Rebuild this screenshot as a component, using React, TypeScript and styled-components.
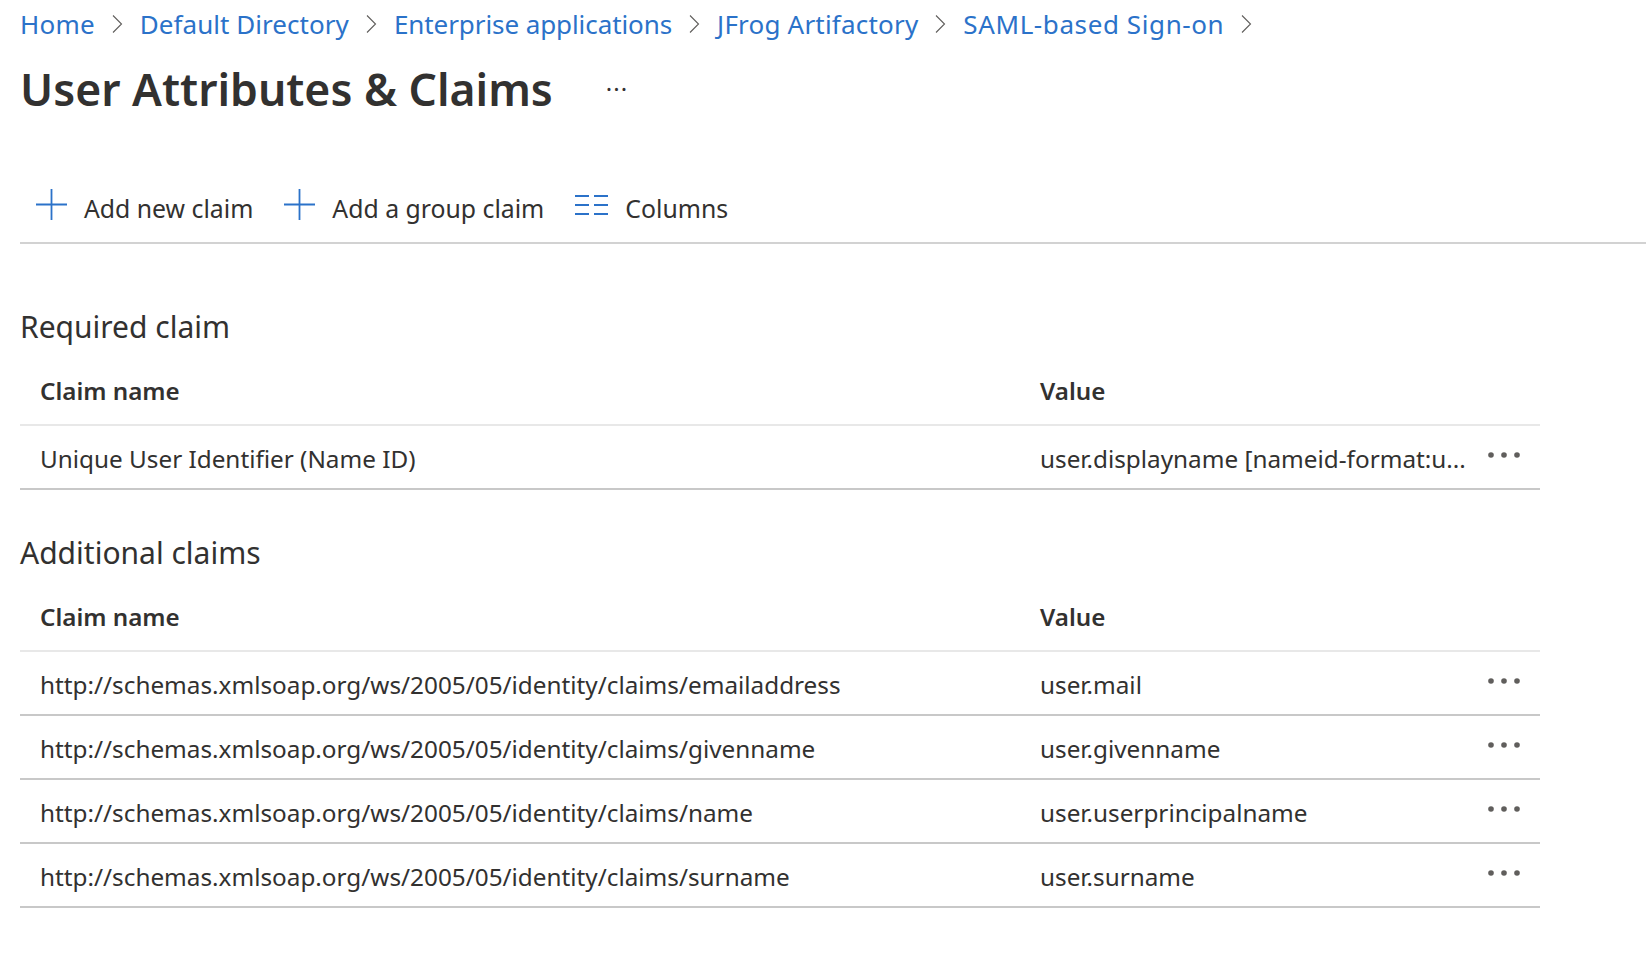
import styled, { createGlobalStyle } from "styled-components";

const GlobalStyle = createGlobalStyle`
  html, body {
    margin: 0;
    background: #fff;
  }
  body {
    font-family: "Noto Sans", "Open Sans", sans-serif;
    color: #323130;
  }
`;

const crumbs = [
  { label: "Home", tracking: 0.2 },
  { label: "Default Directory", tracking: 0.05 },
  { label: "Enterprise applications", tracking: -0.08 },
  { label: "JFrog Artifactory", tracking: 0.2 },
  { label: "SAML-based Sign-on", tracking: 0.6 },
];

const additional = [
  ["http://schemas.xmlsoap.org/ws/2005/05/identity/claims/emailaddress", "user.mail"],
  ["http://schemas.xmlsoap.org/ws/2005/05/identity/claims/givenname", "user.givenname"],
  ["http://schemas.xmlsoap.org/ws/2005/05/identity/claims/name", "user.userprincipalname"],
  ["http://schemas.xmlsoap.org/ws/2005/05/identity/claims/surname", "user.surname"],
];

function Chevron() {
  return (
    <svg width="11" height="20" viewBox="0 0 11 20" fill="none">
      <path d="M1 1.5 L9.5 10 L1 18.5" stroke="#605e5c" strokeWidth="1.1" />
    </svg>
  );
}

function PlusIcon() {
  return (
    <svg width="31" height="31" viewBox="0 0 31 31" fill="none">
      <path d="M15.5 0 V31 M0 15.5 H31" stroke="#2b72c9" strokeWidth="1.8" />
    </svg>
  );
}

function ColumnsIcon() {
  return (
    <svg width="33" height="20" viewBox="0 0 33 20" fill="none">
      <path
        d="M0 1 H14 M19 1 H33 M0 10 H14 M19 10 H33 M0 19 H14 M19 19 H33"
        stroke="#2b72c9"
        strokeWidth="2"
      />
    </svg>
  );
}

function MoreDots() {
  return (
    <svg width="34" height="8" viewBox="0 0 34 8" fill="#605e5c">
      <circle cx="4" cy="4" r="2.8" />
      <circle cx="17" cy="4" r="2.8" />
      <circle cx="30" cy="4" r="2.8" />
    </svg>
  );
}

function ClaimRow({ name, value }: { name: string; value: string }) {
  return (
    <Row>
      <NameCell>{name}</NameCell>
      <ValueCell>{value}</ValueCell>
      <ActionCell>
        <MoreDots />
      </ActionCell>
    </Row>
  );
}

function TableHead() {
  return (
    <HeadRow>
      <HeadCell>Claim name</HeadCell>
      <HeadCell>Value</HeadCell>
    </HeadRow>
  );
}

export default function App() {
  return (
    <Page>
      <GlobalStyle />
      <Breadcrumb>
        {crumbs.map((c) => (
          <Crumb key={c.label}>
            <CrumbLink $tracking={c.tracking}>{c.label}</CrumbLink>
            <Chevron />
          </Crumb>
        ))}
      </Breadcrumb>
      <TitleRow>
        <Title>User Attributes &amp; Claims</Title>
        <TitleMore>···</TitleMore>
      </TitleRow>
      <Toolbar>
        <ToolButton>
          <PlusIcon />
          <ToolLabel>Add new claim</ToolLabel>
        </ToolButton>
        <ToolButton>
          <PlusIcon />
          <ToolLabel>Add a group claim</ToolLabel>
        </ToolButton>
        <ToolButton>
          <ColumnsIcon />
          <ToolLabel>Columns</ToolLabel>
        </ToolButton>
      </Toolbar>
      <Section>
        <SectionTitle>Required claim</SectionTitle>
        <TableHead />
        <ClaimRow
          name="Unique User Identifier (Name ID)"
          value="user.displayname [nameid-format:u..."
        />
      </Section>
      <Section>
        <SectionTitle>Additional claims</SectionTitle>
        <TableHead />
        {additional.map(([name, value]) => (
          <ClaimRow key={name} name={name} value={value} />
        ))}
      </Section>
    </Page>
  );
}

const Page = styled.div`
  padding: 0 0 0 20px;
  height: 964px;
  box-sizing: border-box;
  overflow: hidden;
`;

const Breadcrumb = styled.nav`
  display: flex;
  height: 48px;
  align-items: center;
`;

const Crumb = styled.div`
  display: flex;
  align-items: center;
  gap: 17px;
  margin-right: 17px;
`;

const CrumbLink = styled.a<{ $tracking: number }>`
  font-size: 26px;
  letter-spacing: ${(p) => p.$tracking}px;
  color: #2b72c9;
`;

const TitleRow = styled.div`
  display: flex;
  align-items: center;
  height: 80px;
`;

const Title = styled.h1`
  margin: 0;
  font-size: 44.5px;
  font-weight: 600;
  color: #323130;
`;

const TitleMore = styled.span`
  margin-left: 53px;
  font-size: 24px;
  letter-spacing: 1px;
  color: #323130;
`;

const Toolbar = styled.div`
  display: flex;
  align-items: center;
  gap: 31px;
  margin-top: 39px;
  height: 75px;
  padding-left: 16px;
  border-bottom: 2px solid #d2d2d2;
`;

const ToolButton = styled.div`
  display: flex;
  align-items: center;
  gap: 17px;
`;

const ToolLabel = styled.span`
  font-size: 24.8px;
  padding-top: 6px;
  color: #323130;
`;

const Section = styled.section`
  width: 1520px;
  margin-top: 39px;
  &:first-of-type {
    margin-top: 59px;
  }
`;

const SectionTitle = styled.h2`
  margin: 0 0 5px;
  height: 48px;
  line-height: 48px;
  font-size: 30px;
  font-weight: 400;
  color: #323130;
`;

const HeadRow = styled.div`
  display: grid;
  grid-template-columns: 1000px 1fr;
  align-items: center;
  height: 68px;
  padding-left: 20px;
  border-bottom: 2px solid #e8e8e8;
`;

const HeadCell = styled.div`
  font-size: 24.2px;
  font-weight: 600;
`;

const Row = styled.div`
  display: grid;
  grid-template-columns: 1000px 425px 1fr;
  align-items: center;
  height: 62px;
  padding-left: 20px;
  border-bottom: 2px solid #c8c8c8;
`;

const NameCell = styled.div`
  font-size: 24.3px;
  padding-top: 3px;
  white-space: nowrap;
`;

const ValueCell = styled.div`
  font-size: 24.3px;
  padding-top: 3px;
  white-space: nowrap;
`;

const ActionCell = styled.div`
  display: flex;
  padding-left: 22px;
  margin-top: -4px;
`;
